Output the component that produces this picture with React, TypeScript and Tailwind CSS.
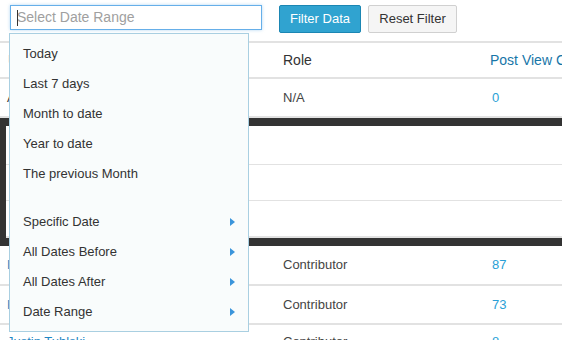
import React from "react";

const presets = ["Today", "Last 7 days", "Month to date", "Year to date", "The previous Month"];
const pickers = ["Specific Date", "All Dates Before", "All Dates After", "Date Range"];

function Arrow() {
  return (
    <svg width="5" height="8" viewBox="0 0 5 8" className="shrink-0">
      <path d="M0 0 L5 4 L0 8 Z" fill="#3b95db" />
    </svg>
  );
}

function Row({ first, role, views, firstLink, className }: { first: string; role: string; views: string; firstLink?: boolean; className: string }) {
  return (
    <div className={`flex items-center text-[13px] ${className}`}>
      <div className={`w-[275px] shrink-0 pl-[7px] ${firstLink ? "text-[#1f87c4]" : "text-[#333]"}`}>{first}</div>
      <div className="w-[209px] shrink-0 pl-[8px] text-[#444]">{role}</div>
      <div className="pl-[8px] text-[#2a9fd6]">{views}</div>
    </div>
  );
}

export default function App() {
  return (
    <div className="relative w-[562px] h-[340px] overflow-hidden bg-white font-['Liberation_Sans',Arial,sans-serif]">
      {/* toolbar */}
      <div className="flex items-start h-[43px] pt-[5px] pl-[10px] border-b-2 border-[#e2e2e2]">
        <div className="relative flex items-center w-[252px] h-[25px] border border-[#66afe9] shadow-[0_0_3px_rgba(102,175,233,0.5)] pl-[6px] text-[14px] text-[#a0a0a0]">
          <span className="absolute left-[6px] top-[4px] w-px h-[16px] bg-[#333]" />
          Select Date Range
        </div>
        <button className="ml-[17px] h-[28px] w-[82px] rounded-[2px] border border-[#1b86b3] bg-[#30a3d0] text-[13px] text-white">
          Filter Data
        </button>
        <button className="ml-[7px] h-[28px] w-[89px] rounded-[2px] border border-[#d0d0d0] bg-[#f5f5f5] text-[13px] text-[#333]">
          Reset Filter
        </button>
      </div>

      {/* table */}
      <div className="flex items-center h-[36px] border-b-2 border-[#e2e2e2] text-[14px]">
        <div className="w-[275px] shrink-0 pl-[8px] text-[#1776a8]">Username</div>
        <div className="w-[207px] shrink-0 pl-[8px] text-[#333]">Role</div>
        <div className="shrink-0 pl-[8px] text-[#1776a8] whitespace-nowrap">Post View Count</div>
      </div>
      <Row first="Admin" role="N/A" views="0" className="h-[39px] border-b-2 border-[#e2e2e2]" />

      <div className="border-t-8 border-b-8 border-l-[6px] border-[#333]">
        <div className="h-[39px] border-b border-[#e2e2e2]" />
        <div className="h-[36px] border-b border-[#e2e2e2]" />
        <div className="h-[37px] border-b-2 border-[#e2e2e2]" />
      </div>

      <Row first="Lisa Mathers" role="Contributor" views="87" firstLink className="h-[40px] border-b-2 border-[#e2e2e2]" />
      <Row first="Karl Simmons" role="Contributor" views="73" firstLink className="h-[39px] border-b-2 border-[#e2e2e2]" />
      <Row first="Justin Tuhlski" role="Contributor" views="8" firstLink className="h-[33px]" />

      {/* dropdown */}
      <div className="absolute left-[9px] top-[33px] w-[240px] border border-[#a9cfe1] bg-[#f9fcfc] pt-[5px] pb-[4px] text-[13px] text-[#333]">
        {presets.map((p) => (
          <div key={p} className="flex items-center h-[30px] pl-[13px]">
            {p}
          </div>
        ))}
        <div className="h-[18px]" />
        {pickers.map((p) => (
          <div key={p} className="flex items-center justify-between h-[30px] pl-[13px] pr-[13px]">
            <span>{p}</span>
            <Arrow />
          </div>
        ))}
      </div>
    </div>
  );
}
